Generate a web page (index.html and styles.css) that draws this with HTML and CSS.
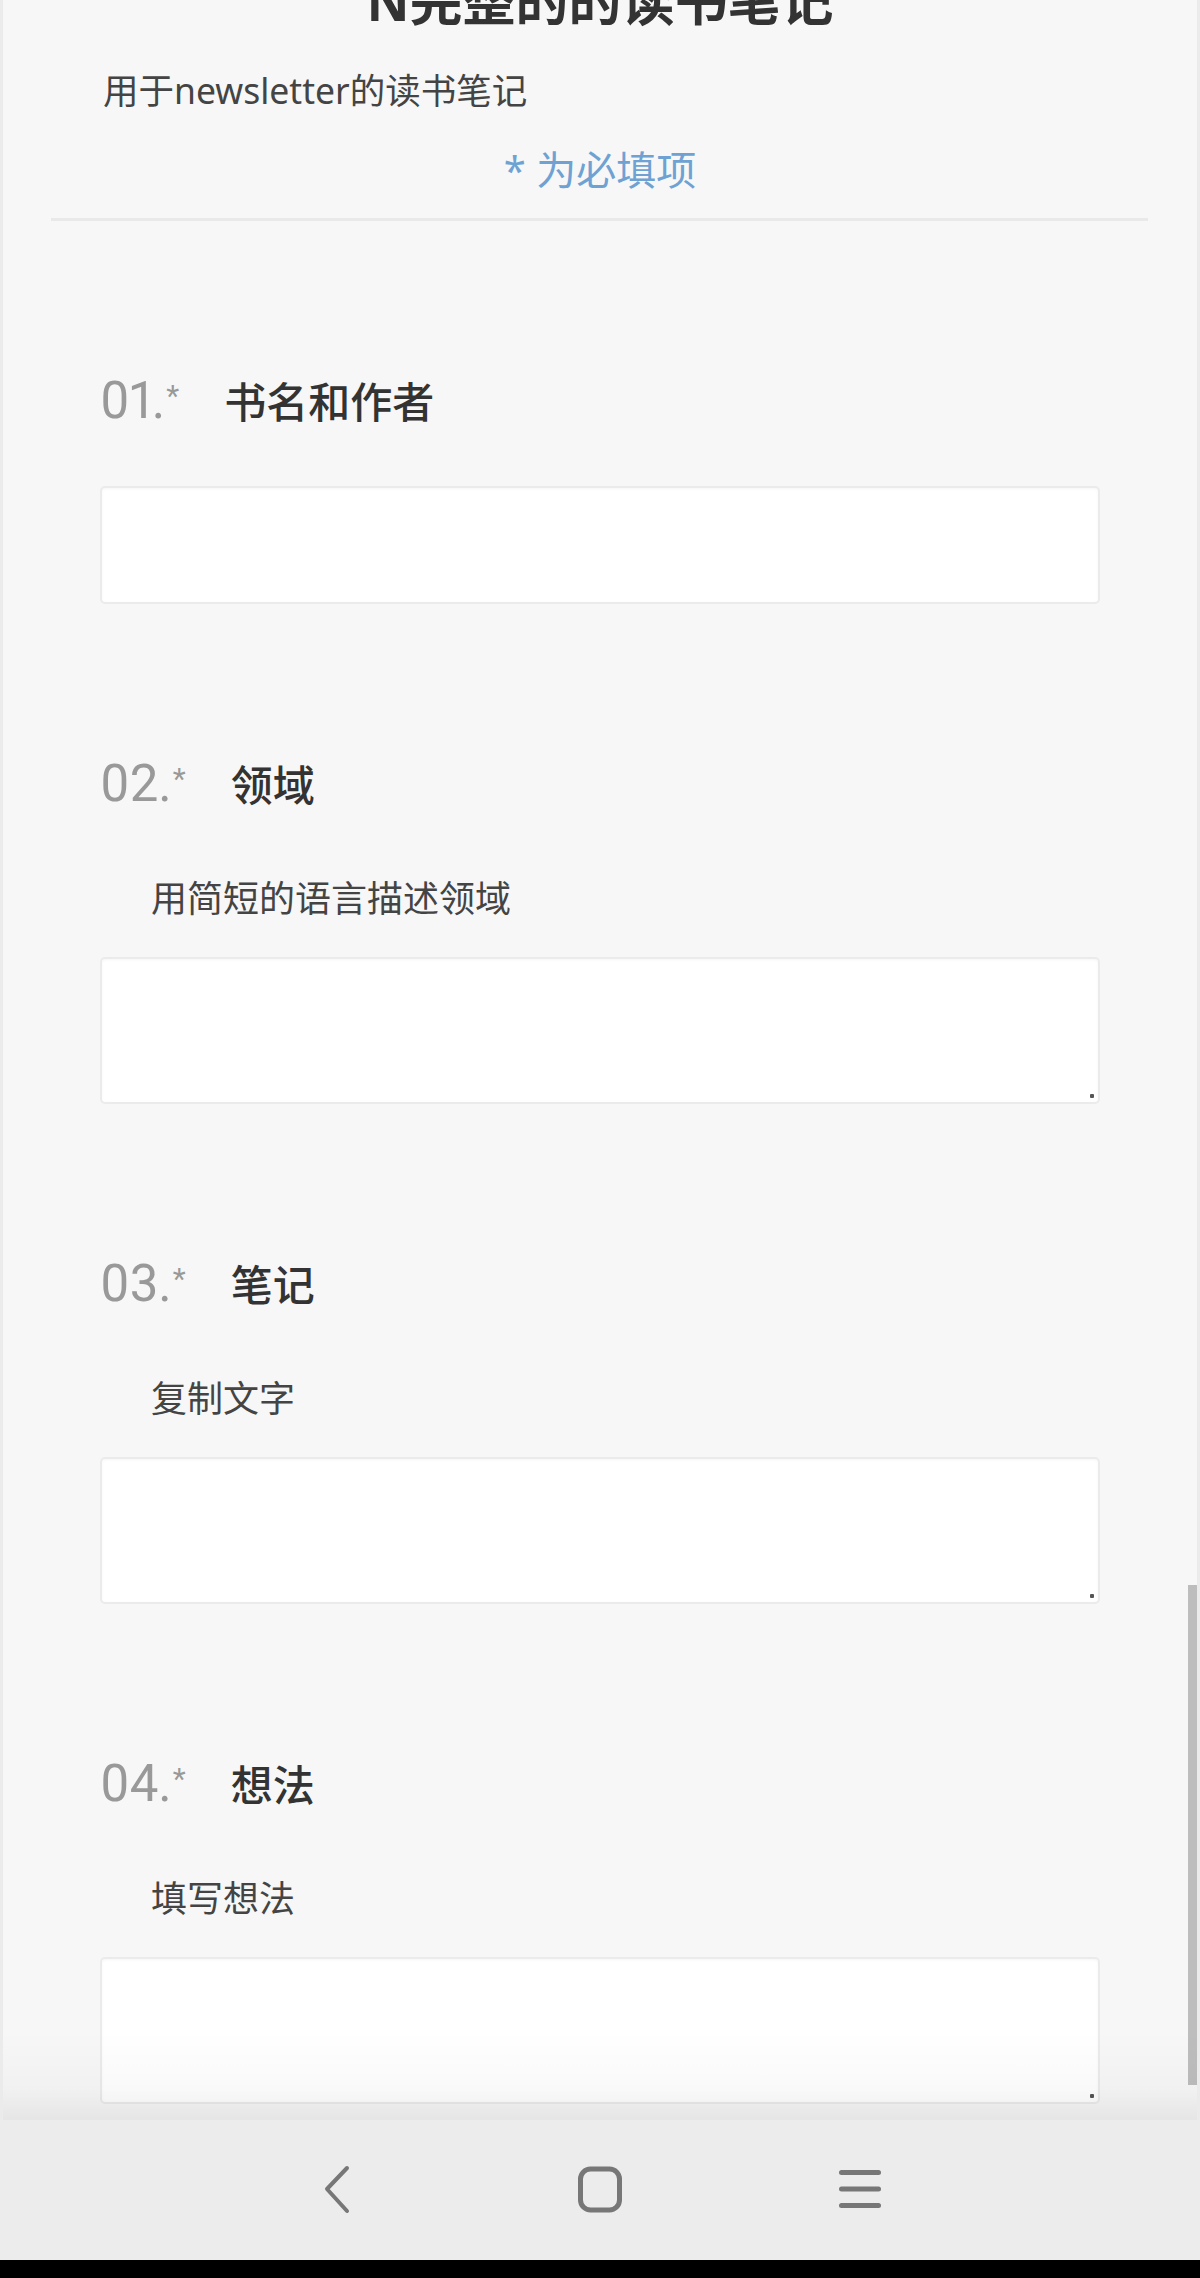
FILE: index.html
```html
<!DOCTYPE html>
<html lang="zh-CN">
<head>
<meta charset="utf-8">
<title>N完整的的读书笔记</title>
<link rel="stylesheet" href="styles.css">
</head>
<body>
<main class="screen">
  <header class="form-head">
    <h1 class="form-title">N完整的的读书笔记</h1>
    <p class="form-desc">用于newsletter的读书笔记</p>
    <p class="required-note">* 为必填项</p>
  </header>
  <div class="divider"></div>

  <form class="questions">
    <section class="question">
      <div class="q-head">
        <span class="q-num">01.<span class="q-star">*</span></span>
        <span class="q-title">书名和作者</span>
      </div>
      <input class="field field-input" type="text" aria-label="书名和作者">
    </section>

    <section class="question">
      <div class="q-head">
        <span class="q-num">02.<span class="q-star">*</span></span>
        <span class="q-title">领域</span>
      </div>
      <p class="q-desc">用简短的语言描述领域</p>
      <div class="area-wrap"><textarea class="field field-area" aria-label="领域"></textarea></div>
    </section>

    <section class="question">
      <div class="q-head">
        <span class="q-num">03.<span class="q-star">*</span></span>
        <span class="q-title">笔记</span>
      </div>
      <p class="q-desc">复制文字</p>
      <div class="area-wrap"><textarea class="field field-area" aria-label="笔记"></textarea></div>
    </section>

    <section class="question">
      <div class="q-head">
        <span class="q-num">04.<span class="q-star">*</span></span>
        <span class="q-title">想法</span>
      </div>
      <p class="q-desc">填写想法</p>
      <div class="area-wrap"><textarea class="field field-area" aria-label="想法"></textarea></div>
    </section>
  </form>

  <div class="scroll-thumb"></div>
  <div class="bottom-fade"></div>
</main>

<nav class="navbar">
  <span class="nav-btn">
    <svg width="40" height="56" viewBox="0 0 40 56" aria-hidden="true">
      <polyline points="27,6 7,27 27,49" fill="none" stroke="#777" stroke-width="4" stroke-linecap="round" stroke-linejoin="round"/>
    </svg>
  </span>
  <span class="nav-btn">
    <svg width="56" height="56" viewBox="0 0 56 56" aria-hidden="true">
      <rect x="8.5" y="7" width="39" height="41" rx="10" ry="10" fill="none" stroke="#777" stroke-width="5"/>
    </svg>
  </span>
  <span class="nav-btn">
    <svg width="56" height="56" viewBox="0 0 56 56" aria-hidden="true">
      <line x1="9.5" y1="10.5" x2="46.5" y2="10.5" stroke="#777" stroke-width="5" stroke-linecap="round"/>
      <line x1="9.5" y1="27" x2="46.5" y2="27" stroke="#777" stroke-width="5" stroke-linecap="round"/>
      <line x1="9.5" y1="43.5" x2="46.5" y2="43.5" stroke="#777" stroke-width="5" stroke-linecap="round"/>
    </svg>
  </span>
</nav>
<div class="sysbar"></div>
</body>
</html>
```

FILE: styles.css
```css
html, body {
  margin: 0;
  padding: 0;
}

body {
  height: 2278px;
  display: flex;
  flex-direction: column;
  overflow: hidden;
  background: #f7f7f7;
  font-family: "Noto Sans", "Noto Sans CJK SC", sans-serif;
  color: #333;
}

.screen {
  flex: 1;
  position: relative;
  overflow: hidden;
  border-left: 3px solid #ebebeb;
  border-right: 3px solid #ebebeb;
  background: #f7f7f7;
}

.form-head {
  text-align: center;
}

.form-title {
  margin: -26px 0 0;
  font-size: 53px;
  line-height: 53px;
  font-weight: 700;
  color: #333;
}

.form-desc {
  margin: 46px 0 0;
  padding-left: 100px;
  text-align: left;
  font-size: 35.5px;
  line-height: 35px;
  color: #444;
}

.required-note {
  margin: 42px 0 0;
  font-size: 40px;
  line-height: 40px;
  color: #6ea2d3;
}

.divider {
  height: 3px;
  margin: 28px 49px 0 48px;
  background: #e9e9e9;
}

.questions {
  margin: 0;
  padding: 0 97px;
}

.question {
  margin-top: 160px;
}

.q-head {
  display: flex;
  align-items: baseline;
  gap: 45px;
}

.q-num {
  font-family: Roboto, "Noto Sans", sans-serif;
  font-weight: 400;
  font-size: 51px;
  line-height: 40px;
  font-variant-numeric: proportional-nums;
  color: #999;
}

.q-star {
  font-size: 30px;
  line-height: 0;
  vertical-align: 12px;
  margin-left: 1px;
}

.q-title {
  font-size: 42px;
  line-height: 40px;
  font-weight: 500;
  color: #333;
}

.q-desc {
  margin: 76px 0 0 51px;
  font-size: 36px;
  line-height: 36px;
  color: #444;
}

.field {
  display: block;
  width: 100%;
  box-sizing: border-box;
  margin: 0;
  padding: 0;
  background: #fff;
  border: 2px solid #ebebeb;
  border-radius: 5px;
  box-shadow: inset 0 1px 3px rgba(0, 0, 0, 0.04);
  outline: none;
  -webkit-appearance: none;
  appearance: none;
  font: inherit;
}

.field-input {
  height: 118px;
  margin-top: 64px;
}

.area-wrap {
  position: relative;
  margin-top: 40px;
}

.field-area {
  height: 147px;
  resize: none;
}

.area-wrap::after {
  content: "";
  position: absolute;
  right: 6px;
  bottom: 6px;
  width: 4px;
  height: 4px;
  border-radius: 1px;
  background: #555;
}

.scroll-thumb {
  position: absolute;
  top: 1585px;
  right: -3px;
  width: 12px;
  height: 500px;
  background: #bdbdbd;
}

.bottom-fade {
  position: absolute;
  left: 0;
  right: 0;
  bottom: 0;
  height: 90px;
  pointer-events: none;
  background: linear-gradient(to bottom, rgba(0, 0, 0, 0) 0%, rgba(0, 0, 0, 0.025) 65%, rgba(0, 0, 0, 0.07) 100%);
}

.navbar {
  height: 140px;
  flex: none;
  display: flex;
  justify-content: center;
  align-items: center;
  gap: 200px;
  background: #ececec;
}

.nav-btn {
  width: 60px;
  height: 60px;
  display: flex;
  align-items: center;
  justify-content: center;
}

.sysbar {
  height: 18px;
  flex: none;
  background: #000;
}
```
